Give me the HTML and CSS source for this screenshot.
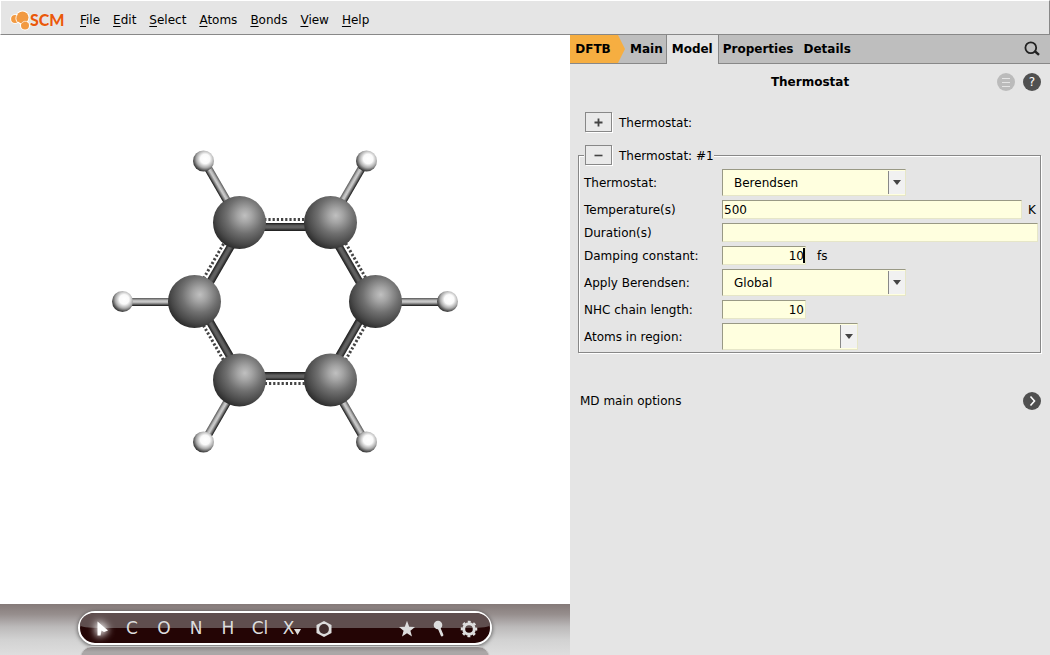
FILE: index.html
```html
<!DOCTYPE html>
<html lang="en">
<head>
<meta charset="utf-8">
<title>SCM - Thermostat</title>
<link rel="stylesheet" href="styles.css">
</head>
<body>
<header class="menubar">
  <div class="logo">
    <svg class="logo-mark" viewBox="0 0 24 22" width="24" height="22" aria-hidden="true">
      <g fill="#fff"><circle cx="5" cy="10" r="4.800"/><circle cx="12.500" cy="8.500" r="7"/><circle cx="15" cy="16.500" r="5"/></g>
      <g fill="#f29a42">
        <circle cx="5" cy="10" r="3.900"/><circle cx="12.500" cy="8.500" r="6"/><circle cx="15" cy="16.500" r="4"/>
      </g>
      <path d="M7.200 5.500A6.800 6.800 0 0 0 8 14" fill="none" stroke="#fff" stroke-width=".9"/>
      <path d="M11.400 14.600A4.400 4.400 0 0 1 18 13.200" fill="none" stroke="#fff" stroke-width=".7"/>
    </svg>
    <span class="logo-text">SCM</span>
  </div>
  <nav class="menus">
    <button class="menu"><u>F</u>ile</button>
    <button class="menu"><u>E</u>dit</button>
    <button class="menu"><u>S</u>elect</button>
    <button class="menu"><u>A</u>toms</button>
    <button class="menu"><u>B</u>onds</button>
    <button class="menu"><u>V</u>iew</button>
    <button class="menu"><u>H</u>elp</button>
  </nav>
</header>
<div class="workspace">
  <main class="viewer">
    <svg class="molecule" viewBox="0 35 570 569" role="img" aria-label="Benzene molecule">
      <defs>
        <radialGradient id="carbon" cx="0.6" cy="0.37" r="0.68">
          <stop offset="0" stop-color="#c0c0c0"/><stop offset="0.2" stop-color="#a4a4a4"/><stop offset="0.5" stop-color="#707070"/><stop offset="0.8" stop-color="#484848"/><stop offset="1" stop-color="#262626"/>
        </radialGradient>
        <radialGradient id="hydrogen" cx="0.58" cy="0.4" r="0.65">
          <stop offset="0" stop-color="#fff"/><stop offset="0.35" stop-color="#fafafa"/><stop offset="0.65" stop-color="#aaa"/><stop offset="0.85" stop-color="#555"/><stop offset="1" stop-color="#222"/>
        </radialGradient>
        <linearGradient id="single" x1="0" y1="0" x2="0" y2="1">
          <stop offset="0" stop-color="#555"/><stop offset="0.3" stop-color="#bbb"/><stop offset="0.5" stop-color="#ccc"/><stop offset="0.75" stop-color="#777"/><stop offset="1" stop-color="#111"/>
        </linearGradient>
        <linearGradient id="ring" x1="0" y1="0" x2="0" y2="1">
          <stop offset="0" stop-color="#1c1c1c"/><stop offset="0.35" stop-color="#606060"/><stop offset="0.6" stop-color="#606060"/><stop offset="1" stop-color="#181818"/>
        </linearGradient>
        <g id="ch"><rect y="-4" width="71" height="8" fill="url(#single)"/></g>
        <g id="cc">
          <rect y="0" width="91" height="8" fill="url(#ring)"/>
          <path d="M0 -3.500H91" stroke="#444" stroke-width="3" stroke-dasharray="2.200 2"/>
        </g>
      </defs>
      <use href="#ch" transform="translate(204 161) rotate(60)"/>
      <use href="#ch" transform="translate(330 223) rotate(-60)"/>
      <use href="#ch" transform="translate(122 302)"/>
      <use href="#ch" transform="translate(376 302)"/>
      <use href="#ch" transform="translate(204 442) rotate(-60)"/>
      <use href="#ch" transform="translate(330 380) rotate(60)"/>
      <use href="#cc" transform="translate(239 223)"/>
      <use href="#cc" transform="translate(330 223) rotate(60)"/>
      <use href="#cc" transform="translate(375 302) rotate(120)"/>
      <use href="#cc" transform="translate(330 380) rotate(180)"/>
      <use href="#cc" transform="translate(239 380) rotate(240)"/>
      <use href="#cc" transform="translate(194 302) rotate(300)"/>
      <g fill="url(#carbon)">
        <circle cx="239.500" cy="222.500" r="26.500"/><circle cx="330.500" cy="222.500" r="26.500"/>
        <circle cx="194.500" cy="301.500" r="26.500"/><circle cx="375.500" cy="301.500" r="26.500"/>
        <circle cx="239.500" cy="380" r="26.500"/><circle cx="330.500" cy="380" r="26.500"/>
      </g>
      <g fill="url(#hydrogen)">
        <circle cx="203.500" cy="161" r="10.500"/><circle cx="366.500" cy="161" r="10.500"/>
        <circle cx="122.500" cy="301.500" r="10.500"/><circle cx="447.500" cy="301.500" r="10.500"/>
        <circle cx="203.500" cy="442" r="10.500"/><circle cx="366.500" cy="442" r="10.500"/>
      </g>
    </svg>
    <div class="dock">
      <div class="pill">
        <button class="tool tool-active" aria-label="Select">
          <svg viewBox="0 0 14 18" width="14" height="18"><path d="M2.500 1.500L13 10.500L9 12L6.500 10.500L5.500 15.500H2.500Z" fill="#fff"/></svg>
        </button>
        <button class="tool">C</button>
        <button class="tool">O</button>
        <button class="tool">N</button>
        <button class="tool">H</button>
        <button class="tool">Cl</button>
        <button class="tool tool-x">X<svg viewBox="0 0 7 7" width="7" height="7" aria-hidden="true"><path d="M0 0H7L3.500 6Z" fill="#ddd"/></svg></button>
        <button class="tool" aria-label="Ring">
          <svg viewBox="0 0 18 18" width="18" height="18"><path d="M9 1L16.500 5V13L9 17L1.500 13V5Z" fill="#ddd"/><circle cx="9" cy="9" r="4.900" fill="#412d2d"/></svg>
        </button>
        <span class="pill-space"></span>
        <button class="tool" aria-label="Favourites">
          <svg viewBox="0 0 18 18" width="18" height="18"><path d="M9 .8L11.200 6.700L17 7L12.400 10.700L14 16.500L9 13.200L4 16.500L5.600 10.700L1 7L6.800 6.700Z" fill="#ddd"/></svg>
        </button>
        <button class="tool" aria-label="Measure">
          <svg viewBox="0 0 18 18" width="18" height="18"><circle cx="8" cy="5" r="4.300" fill="#ddd"/><path d="M8 6L9.500 9L12 15" fill="none" stroke="#ddd" stroke-width="2.800" stroke-linecap="round"/></svg>
        </button>
        <button class="tool tool-last" aria-label="Settings">
          <svg viewBox="0 0 18 18" width="18" height="18"><circle cx="9" cy="9" r="5.300" fill="none" stroke="#ddd" stroke-width="3"/><circle cx="9" cy="9" r="7.200" fill="none" stroke="#ddd" stroke-width="2.200" stroke-dasharray="2.830 2.825" transform="rotate(-11 9 9)"/></svg>
        </button>
      </div>
    </div>
  </main>
  <aside class="panel">
    <nav class="tabs">
      <button class="tab tab-engine">DFTB</button>
      <button class="tab tab-main">Main</button>
      <button class="tab tab-current">Model</button>
      <button class="tab tab-next">Properties</button>
      <button class="tab">Details</button>
      <button class="tab-search" aria-label="Search">
        <svg viewBox="0 0 16 16" width="16" height="16"><circle cx="6.800" cy="6.800" r="5.400" fill="none" stroke="#222" stroke-width="1.800"/><path d="M10.600 10L15 13.800" stroke="#222" stroke-width="2.400"/></svg>
      </button>
    </nav>
    <div class="title-row">
      <h1 class="title">Thermostat</h1>
      <div class="title-tools">
        <button class="round round-light" aria-label="Contents"><svg viewBox="0 0 18 18" width="18" height="18"><path d="M5 5.500H13M5 9.500H13M5 13.500H13" stroke="#e5e5e5" stroke-width="1"/></svg></button>
        <button class="round">?</button>
      </div>
    </div>
    <form class="form">
      <div class="add-row">
        <button type="button" class="step" id="add"><svg viewBox="0 0 9 9" width="9" height="9"><path d="M4.500 .5V8.500M.5 4.500H8.500" stroke="#444" stroke-width="1.800"/></svg></button>
        <label class="head-text" for="add">Thermostat:</label>
      </div>
      <fieldset class="group">
        <legend class="group-head">
          <button type="button" class="step" aria-label="Remove"><svg viewBox="0 0 9 9" width="9" height="9"><path d="M.5 4.500H8.500" stroke="#444" stroke-width="1.600"/></svg></button>
          <span class="head-text">Thermostat: #1</span>
        </legend>
        <div class="rows">
          <label for="kind">Thermostat:</label>
          <div class="combo"><select class="field select" id="kind"><option>Berendsen</option></select><span class="arrow"></span></div>
          <label for="temp">Temperature(s)</label>
          <div class="line"><input class="field grow" id="temp" type="text" value="500"><span class="unit">K</span></div>
          <label for="duration">Duration(s)</label>
          <div class="line"><input class="field grow" id="duration" type="text"></div>
          <label for="damping">Damping constant:</label>
          <div class="line line-damping"><span class="edit"><input class="field number" id="damping" type="text" value="10"><span class="caret"></span></span><span>fs</span></div>
          <label for="apply">Apply Berendsen:</label>
          <div class="combo"><select class="field select" id="apply"><option>Global</option></select><span class="arrow"></span></div>
          <label for="nhc">NHC chain length:</label>
          <div class="line"><input class="field number" id="nhc" type="text" value="10"></div>
          <label for="region">Atoms in region:</label>
          <div class="combo combo-small"><select class="field select" id="region"><option></option></select><span class="arrow"></span></div>
        </div>
      </fieldset>
    </form>
    <div class="link-row">
      <span>MD main options</span>
      <button class="round" aria-label="Open MD main options"><svg viewBox="0 0 18 18" width="18" height="18"><path d="M7.500 4.500L11.500 9L7.500 13.500" fill="none" stroke="#fff" stroke-width="1.600"/></svg></button>
    </div>
  </aside>
</div>
</body>
</html>
```
FILE: styles.css
```css
* { box-sizing: border-box; }

body {
  margin: 0;
  min-height: 100vh;
  display: flex;
  flex-direction: column;
  background: #e5e5e5;
  color: #000;
  font: 12px/16px "DejaVu Sans", sans-serif;
}

button, input, select { font: inherit; color: inherit; margin: 0; }
button { border: 0; padding: 0; background: none; }
svg { display: block; flex: none; }

/* Menu bar */
.menubar {
  display: flex;
  align-items: center;
  height: 35px;
  padding: 4px 9px 0;
  border: 1px solid #888;
  border-top-color: #fff;
  border-left-color: #fff;
}
.logo { display: flex; align-items: center; width: 70px; }
.logo-mark { margin-right: -4px; }
.logo-text { font: 900 16px/20px Lato, sans-serif; color: #e8590c; text-shadow: 0 0 1px #fff; }
.menus { display: flex; gap: 13px; }
.menu u { text-underline-offset: 2px; }

.workspace { flex: 1; display: grid; grid-template-columns: minmax(0, 1fr) 480px; }

/* Molecule view */
.viewer { display: flex; flex-direction: column; background: #fff; }
.molecule { flex: 1; width: 100%; min-height: 0; }
.dock {
  display: flex;
  justify-content: center;
  height: 51px;
  padding-top: 7px;
  overflow: hidden;
  background: linear-gradient(#857a79, #968e8d 20%, #bcbaba 45%, #d2d2d2 70%, #dedede);
}
.pill {
  position: relative;
  display: flex;
  align-items: center;
  width: 414px;
  height: 34px;
  padding: 1px 7px 0 8px;
  border: 2px solid #fff;
  border-radius: 17px;
  background: #240505;
  box-shadow: 0 1px 4px #0009;
}
.pill::before {
  content: "";
  position: absolute;
  inset: 0 0 50%;
  border-radius: 15px 15px 20px 20px / 13px 13px 3px 3px;
  background: #5f4e4e;
}
.pill::after {
  content: "";
  position: absolute;
  left: 0;
  right: 0;
  top: 33px;
  height: 24px;
  border: 1px solid #ccc;
  border-radius: 12px 12px 0 0;
  background: linear-gradient(#8f8a8a, #aba7a7 5px);
}
.tool {
  position: relative;
  display: flex;
  align-items: center;
  justify-content: center;
  width: 32px;
  height: 29px;
  color: #ddd;
  font-size: 17px;
  line-height: 29px;
}
.tool-active { width: 28px; filter: drop-shadow(0 0 4px #fff) drop-shadow(0 0 3px #fffa); }
.tool-last { width: 28px; }
.tool-x svg { align-self: flex-end; margin-bottom: 7px; }
.pill-space { flex: 1; }

/* Settings panel */
.tabs {
  display: flex;
  height: 29px;
  background: #bebebe;
  border-bottom: 1px solid #888;
}
.tab { padding: 0 5px; font-weight: bold; }
.tab-engine {
  width: 55px;
  padding-right: 14px;
  background: #f6ae41;
  clip-path: polygon(0 0, 48px 0, 100% 50%, 48px 100%, 0 100%);
}
.tab-main { padding-right: 3px; }
.tab-current {
  height: 29px;
  padding-bottom: 1px;
  background: #e5e5e5;
  border: solid #888;
  border-width: 0 1px;
}
.tab-next { padding-left: 4px; }
.tab-search { margin: 0 10px 0 auto; }
.title-row { position: relative; display: flex; align-items: center; justify-content: center; height: 36px; }
.title { margin: 0; font-size: 12px; line-height: 16px; }
.title-tools { position: absolute; right: 9px; display: flex; gap: 8px; }
.round {
  width: 18px;
  height: 18px;
  border-radius: 50%;
  background: #505050;
  color: #fff;
  line-height: 18px;
  text-align: center;
}
.round-light { background: #bbb; }

.form { padding: 12px 9px 0 8px; }
.add-row, .group-head { display: flex; align-items: center; gap: 7px; }
.add-row { padding-left: 7px; margin-bottom: 13px; }
.head-text { padding-top: 2px; }
.step {
  display: grid;
  place-items: center;
  width: 27px;
  height: 20px;
  border: 1px solid #888;
  background: #eaeaea;
  box-shadow: 1px 1px 0 #fff;
}
.group {
  min-width: 0;
  margin: 0;
  padding: 4px 2px 2px 5px;
  border: 1px solid #888;
  box-shadow: 1px 1px 0 #fff, inset 1px 1px 0 #fff;
}
.group-head { padding: 0 0 0 1px; background: #e5e5e5; }
.rows {
  display: grid;
  grid-template-columns: 138px minmax(0, 1fr);
  align-items: center;
  row-gap: 4px;
}
.line { display: flex; align-items: center; }
.field {
  height: 19px;
  padding: 0 1px;
  border: 1px solid #e6e6c8;
  border-top-color: #999985;
  border-left-color: #999985;
  border-radius: 0;
  outline: 0;
  background: #ffffdf;
}
.grow { flex: 1; min-width: 0; }
.unit { width: 16px; padding-left: 6px; }
.number { display: block; width: 84px; text-align: right; }
.line-damping { gap: 11px; }
.edit { position: relative; }
.caret { position: absolute; right: 1px; top: 2px; width: 2px; height: 15px; background: #000; }
.combo { position: relative; width: 184px; }
.combo-small { width: 136px; }
.select { display: block; width: 100%; height: 27px; padding: 0 20px 0 11px; appearance: none; }
.arrow {
  position: absolute;
  top: 2px;
  right: 1px;
  bottom: 2px;
  width: 17px;
  display: grid;
  place-items: center;
  border-left: 1px solid #888;
  background: #f1f1f1;
  pointer-events: none;
}
.arrow::before {
  content: "";
  border: solid transparent;
  border-width: 5px 4px 0;
  border-top-color: #444;
}
.link-row {
  display: flex;
  align-items: center;
  justify-content: space-between;
  padding: 39px 9px 0 10px;
}
```
